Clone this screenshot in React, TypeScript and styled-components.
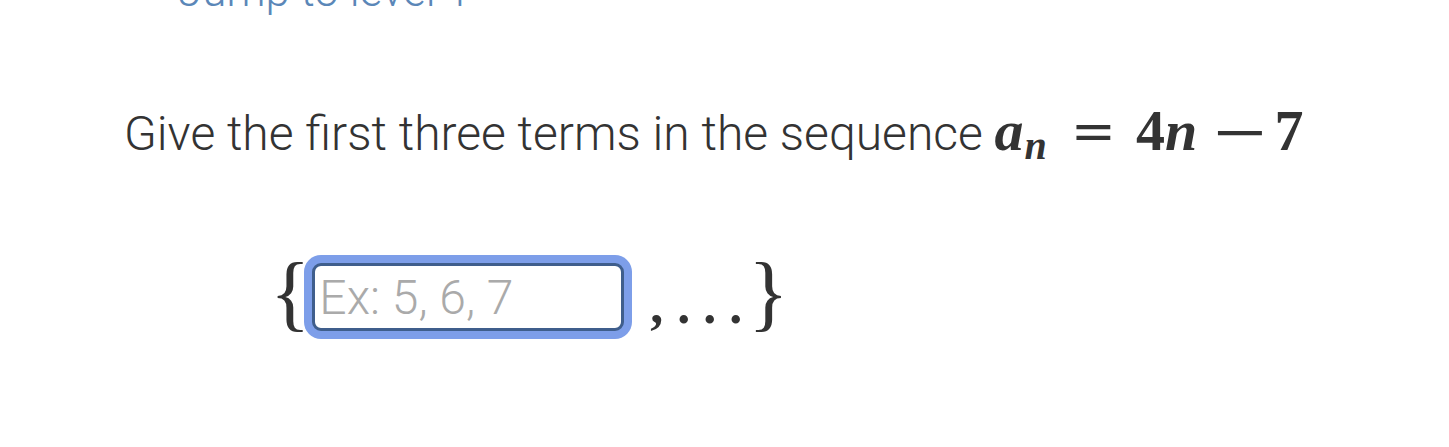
import { createGlobalStyle } from "styled-components";
import styled from "styled-components";

const GlobalStyle = createGlobalStyle`
  html, body {
    margin: 0;
    padding: 0;
    background: #ffffff;
  }
  body {
    font-family: Roboto, "Liberation Sans", sans-serif;
    font-weight: 300;
    color: #333333;
  }
`;

export default function App() {
  return (
    <>
      <GlobalStyle />
      <Page>
        <LevelLink>Jump to level 1</LevelLink>
        <Prompt>
          Give the first three terms in the sequence{" "}
          <MathExpr>
            <Var>a</Var>
            <Sub>n</Sub>
            <Op $before={24} $after={20}>=</Op>
            <Num>4</Num>
            <Var>n</Var>
            <Op $before={20} $after={12} $stretch={1.3}>−</Op>
            <Num>7</Num>
          </MathExpr>
        </Prompt>
        <AnswerRow>
          <Brace>{"{"}</Brace>
          <AnswerInput placeholder="Ex: 5, 6, 7" />
          <Trail>
            <Punct $gap={0}>,</Punct>
            <Punct $gap={14}>.</Punct>
            <Punct $gap={13}>.</Punct>
            <Punct $gap={13}>.</Punct>
          </Trail>
          <Brace>{"}"}</Brace>
        </AnswerRow>
      </Page>
    </>
  );
}

const Page = styled.div`
  width: 1449px;
  height: 447px;
  overflow: hidden;
  display: flex;
  flex-direction: column;
`;

const LevelLink = styled.a`
  display: block;
  margin-top: -37px;
  margin-left: 178px;
  font-size: 44px;
  line-height: 56px;
  color: #5b87b8;
  cursor: pointer;
`;

const Prompt = styled.div`
  margin-top: 83px;
  margin-left: 124px;
  font-size: 48px;
  line-height: 60px;
  height: 60px;
  color: #333333;
  white-space: nowrap;
`;

const MathExpr = styled.span`
  font-family: "Liberation Serif", "DejaVu Serif", serif;
  font-weight: 700;
  font-size: 58px;
  line-height: 1;
  color: #333333;
`;

const Var = styled.span`
  font-style: italic;
`;

const Sub = styled.span`
  font-style: italic;
  font-size: 40px;
  position: relative;
  top: 9px;
  margin-left: 1px;
`;

const Op = styled.span<{ $before: number; $after: number; $stretch?: number }>`
  display: inline-block;
  margin: 0 ${(p) => p.$after}px 0 ${(p) => p.$before}px;
  font-family: "DejaVu Serif", serif;
  font-weight: 400;
  font-size: 54px;
  transform: scaleX(${(p) => p.$stretch ?? 1});
`;

const Num = styled.span`
  font-weight: 700;
`;

const AnswerRow = styled.div`
  margin-top: 90px;
  margin-left: 270px;
  display: flex;
  align-items: center;
  height: 90px;
`;

const Brace = styled.span`
  font-family: "Liberation Serif", "DejaVu Serif", serif;
  font-weight: 400;
  font-size: 84px;
  line-height: 90px;
  color: #333333;
  position: relative;
  top: -4px;
`;

const AnswerInput = styled.input`
  box-sizing: border-box;
  width: 312px;
  height: 68px;
  margin: 0 0 0 2px;
  padding: 0 4px;
  border: 3px solid #3f5e8c;
  border-radius: 9px;
  box-shadow: 0 0 0 8px #7d9ee9;
  font-family: Roboto, "Liberation Sans", sans-serif;
  font-weight: 300;
  font-size: 48px;
  color: #333333;
  outline: none;
  background: #ffffff;

  &::placeholder {
    color: #aaaaaa;
  }
`;

const Trail = styled.span`
  display: flex;
  align-items: baseline;
  margin-left: 26px;
  margin-right: 6px;
  font-family: "Liberation Serif", "DejaVu Serif", serif;
  font-weight: 700;
  font-size: 52px;
  color: #333333;
  position: relative;
  top: 8px;
`;

const Punct = styled.span<{ $gap: number }>`
  margin-left: ${(p) => p.$gap}px;
`;
